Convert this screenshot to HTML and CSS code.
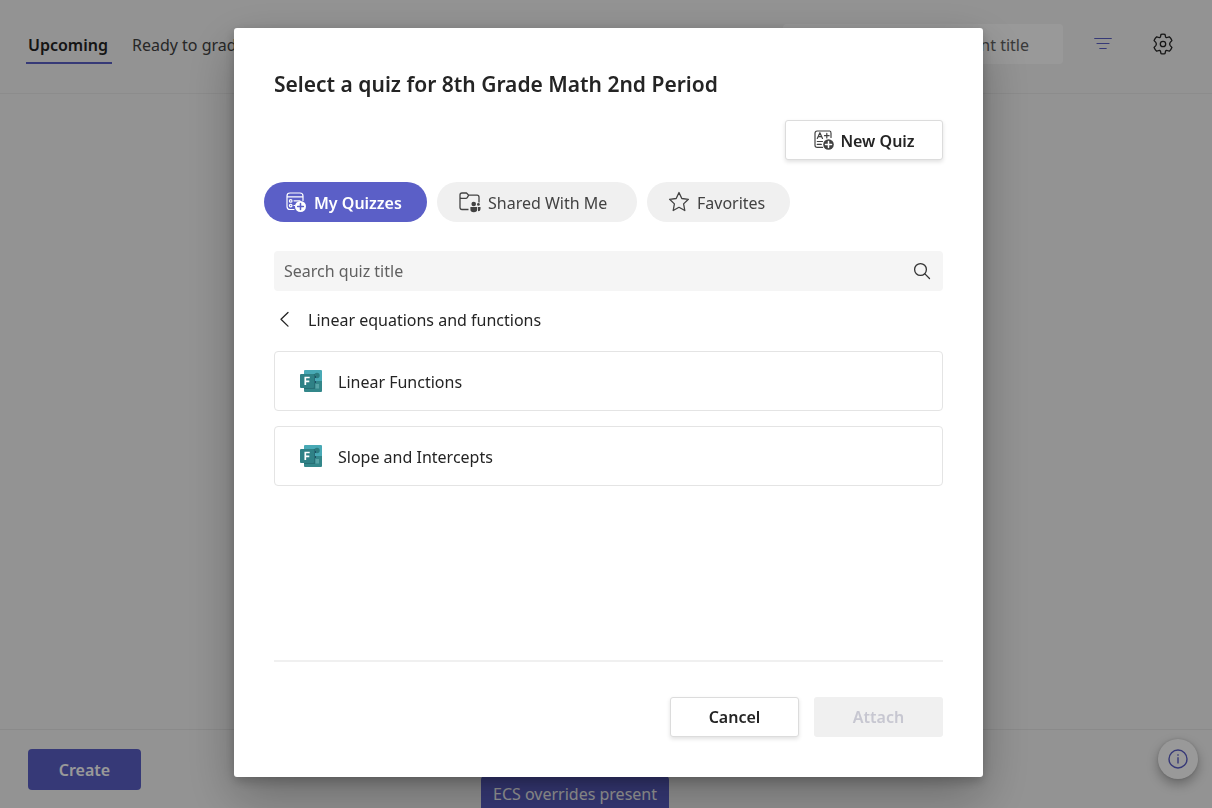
FILE: index.html
```html
<!DOCTYPE html>
<html lang="en">
<head>
<meta charset="utf-8">
<meta name="viewport" content="width=device-width, initial-scale=1">
<title>Assignments</title>
<link rel="stylesheet" href="styles.css">
</head>
<body>
<div class="page">
  <header class="topbar">
    <nav class="tabs">
      <a class="tab tab-active" href="#upcoming">Upcoming</a>
      <a class="tab" href="#ready">Ready to grade</a>
    </nav>
    <div class="tools">
      <input class="page-search" type="text" aria-label="Search assignments" placeholder="Search by assignment title">
      <button class="tool" type="button" aria-label="Filter">
        <svg width="20" height="20" viewBox="0 0 20 20" fill="none" stroke="#5b5fc7" stroke-width="1.2" stroke-linecap="round"><path d="M1.700 4.500h16.600M4 9.500h12M6.800 14.500h6.400"/></svg>
      </button>
      <button class="tool" type="button" aria-label="Settings">
        <svg width="22" height="22" viewBox="0 0 22 22" fill="none" stroke="#242424" stroke-width="1.3" stroke-linejoin="round"><path d="M9 1.300Q11 .8 13 1.300L13.500 3.700Q13.900 4.700 15 4.500L17.300 3.800Q19 5.300 19.900 7.600L18.200 9.400Q17 11 18.200 12.600L19.900 14.400Q19 16.700 17.300 18.200L15 17.500Q13.900 17.300 13.500 18.300L13 20.700Q11 21.200 9 20.700L8.500 18.300Q8.100 17.300 7 17.500L4.700 18.200Q3 16.700 2.100 14.400L3.800 12.600Q5 11 3.800 9.400L2.100 7.600Q3 5.300 4.700 3.800L7 4.500Q8.100 4.700 8.500 3.700Z"/><circle cx="11" cy="11" r="2.700"/></svg>
      </button>
    </div>
  </header>
  <main class="content"></main>
  <footer class="bottombar">
    <button class="create" type="button">Create</button>
    <button class="info" type="button" aria-label="Information">
      <svg width="20" height="20" viewBox="0 0 20 20" fill="none" stroke="#5b5fc7" stroke-width="1.400"><circle cx="10" cy="10" r="9"/><path d="M10 8.300v6.200M10 5.300v1.500"/></svg>
    </button>
  </footer>
  <div class="notice">ECS overrides present</div>
</div>

<div class="overlay">
  <section class="dialog" role="dialog" aria-modal="true" aria-labelledby="dialog-title">
    <h1 class="dialog-title" id="dialog-title">Select a quiz for 8th Grade Math 2nd Period</h1>
    <div class="new-row">
      <button class="btn btn-new" type="button">
        <svg width="22" height="22" viewBox="0 0 22 22" fill="none" stroke="#424242" stroke-width="1.200" stroke-linecap="round" stroke-linejoin="round"><path d="M9.500 18.400H4.200Q2 18.400 2 16.200V4.200Q2 2 4.200 2h12.600Q18 2 18 4.200v4.300M4.300 9.500l2.600-5.800 2.600 5.800M5.200 7.700h3.400M11.500 6.700h4.600M13.800 4.400V9M4.300 12.500h5.200M4.300 15.400h4"/><circle cx="15.500" cy="15.500" r="5.300" fill="#424242" stroke="none"/><path stroke="#fff" stroke-width="1.500" d="M15.500 12.500v6M12.500 15.500h6"/></svg>
        <span>New Quiz</span>
      </button>
    </div>
    <div class="pills">
      <button class="pill pill-active" type="button" aria-pressed="true">
        <svg width="22" height="22" viewBox="0 0 22 22" fill="none" stroke="#fff" stroke-width="1.200" stroke-linecap="round"><path d="M9 18.500H5Q2 18.500 2 15.500V5Q2 2 5 2h10q3 0 3 3v4.500M2.300 5.800h15.400M9 9.800h6M9 14.500h1"/><circle cx="5.700" cy="9.900" r="1.300"/><circle cx="5.700" cy="14.600" r="1.300"/><circle cx="15.500" cy="15.500" r="5.500" fill="#fff" stroke="none"/><path stroke="#5b5fc7" stroke-width="1.500" d="M15.500 12.600v5.800M12.600 15.500h5.800"/></svg>
        <span>My Quizzes</span>
      </button>
      <button class="pill" type="button" aria-pressed="false">
        <svg width="23" height="22" viewBox="0 0 23 22" fill="none" stroke="#424242" stroke-width="1.300" stroke-linejoin="round"><path d="M10.500 18.500H4Q2 18.500 2 16.500V4Q2 2 4 2h4.500l2.200 2.200H19q2 0 2 2v5.300M2 6.500q.3.800 1.500.8h4.300q1 0 1.600-.9l1.300-2.200"/><g fill="#424242" stroke="none"><circle cx="15.700" cy="13" r="2.300"/><circle cx="20.400" cy="13.400" r="1.400"/><path d="M12.400 16h6.800v2.500q0 2.700-3.400 2.700t-3.400-2.700zM20 16h2.500v2.200q0 2-2.500 2z"/></g></svg>
        <span>Shared With Me</span>
      </button>
      <button class="pill pill-last" type="button" aria-pressed="false">
        <svg width="22" height="22" viewBox="0 0 22 22" fill="none" stroke="#424242" stroke-width="1.300" stroke-linejoin="round"><path d="M11 1.500l2.800 6 6.600.8-4.800 4.600 1.200 6.600L11 16.300l-5.800 3.200 1.200-6.600L1.600 8.300l6.600-.8z"/></svg>
        <span>Favorites</span>
      </button>
    </div>
    <div class="search">
      <input class="search-input" type="text" aria-label="Search quiz title" placeholder="Search quiz title">
      <svg width="18" height="18" viewBox="0 0 18 18" fill="none" stroke="#333" stroke-width="1.300" stroke-linecap="round"><circle cx="7.500" cy="7.500" r="5.900"/><path d="M11.900 11.900l4.600 4.600"/></svg>
    </div>
    <div class="crumb">
      <button class="back" type="button" aria-label="Back">
        <svg width="22" height="22" viewBox="0 0 22 22" fill="none" stroke="#242424" stroke-width="1.300" stroke-linecap="round" stroke-linejoin="round"><path d="M14 3.500l-7 6.800 7 6.800"/></svg>
      </button>
      <span>Linear equations and functions</span>
    </div>
    <div class="list">
      <button class="quiz" type="button">
        <svg class="forms" width="22" height="22" viewBox="0 0 22 22"><path fill="#48a9b5" d="M5 0h16q1 0 1 1v10H4V1q0-1 1-1z"/><path fill="#33878a" d="M4 11h18v10q0 1-1 1H5q-1 0-1-1z"/><circle cx="17" cy="5.500" r="2.700" fill="#2c7c80"/><path fill="#276f75" d="M4 4h11v15H4z"/><path fill="#57a3a6" d="M15.500 14H19v4.500h-3.500z"/><path fill="#1d4f68" d="M15 6h1v2h-1zM15 11h1v2h-1z"/><rect y="4" width="14" height="14" rx="1" fill="#2f8186"/><path d="M5.300 15V7.500h4.400M5.300 11.300h4" fill="none" stroke="#fff" stroke-width="1.700"/></svg>
        <span>Linear Functions</span>
      </button>
      <button class="quiz" type="button">
        <svg class="forms" width="22" height="22" viewBox="0 0 22 22"><path fill="#48a9b5" d="M5 0h16q1 0 1 1v10H4V1q0-1 1-1z"/><path fill="#33878a" d="M4 11h18v10q0 1-1 1H5q-1 0-1-1z"/><circle cx="17" cy="5.500" r="2.700" fill="#2c7c80"/><path fill="#276f75" d="M4 4h11v15H4z"/><path fill="#57a3a6" d="M15.500 14H19v4.500h-3.500z"/><path fill="#1d4f68" d="M15 6h1v2h-1zM15 11h1v2h-1z"/><rect y="4" width="14" height="14" rx="1" fill="#2f8186"/><path d="M5.300 15V7.500h4.400M5.300 11.300h4" fill="none" stroke="#fff" stroke-width="1.700"/></svg>
        <span>Slope and Intercepts</span>
      </button>
    </div>
    <div class="actions">
      <button class="btn" type="button">Cancel</button>
      <button class="btn btn-disabled" type="button" disabled>Attach</button>
    </div>
  </section>
</div>
</body>
</html>
```
FILE: styles.css
```css
* { box-sizing: border-box; }

body {
  margin: 0;
  font-family: "Segoe UI", "Noto Sans", "Open Sans", sans-serif;
  font-size: 16px;
  line-height: 24px;
  color: #242424;
}

button, input { font: inherit; color: inherit; }
button { margin: 0; padding: 0; border: 0; background: none; }
svg { display: block; flex: none; }

.page {
  position: relative;
  display: flex;
  flex-direction: column;
  min-height: 100vh;
  overflow: hidden;
  background: #f5f5f5;
}

.topbar {
  display: flex;
  justify-content: space-between;
  align-items: center;
  height: 94px;
  padding: 0 29px 6px 26px;
  border-bottom: 1px solid #e9e9e9;
}

.tabs { display: flex; gap: 18px; }
.tab {
  padding: 9px 2px 5px;
  border-bottom: 2px solid transparent;
  color: #424242;
  text-decoration: none;
  white-space: nowrap;
}
.tab-active { padding-right: 4px; border-color: #5b5fc7; color: #242424; font-weight: 600; }

.tools { display: flex; align-items: center; gap: 20px; }
.page-search {
  width: 280px;
  height: 40px;
  padding: 2px 34px 0 10px;
  border: 0;
  border-radius: 4px;
  background: #fff;
  text-align: right;
}
.page-search::placeholder { color: #616161; opacity: 1; }
.tool { display: grid; place-items: center; width: 40px; height: 40px; }

.content { flex: 1; }

.bottombar {
  display: flex;
  justify-content: space-between;
  align-items: flex-start;
  height: 79px;
  padding: 9px 14px 0 28px;
  border-top: 1px solid #e6e6e6;
}
.create {
  width: 113px;
  height: 41px;
  margin-top: 10px;
  border-radius: 4px;
  background: #5b5fc7;
  color: #fff;
  font-weight: 600;
}
.info {
  display: grid;
  place-items: center;
  width: 40px;
  height: 40px;
  border-radius: 50%;
  background: #fff;
  box-shadow: 0 5px 12px rgba(0, 0, 0, .3), 0 0 3px rgba(0, 0, 0, .15);
}

.notice {
  position: absolute;
  bottom: -6px;
  left: 50%;
  width: 188px;
  margin-left: -125px;
  padding: 6px 0 8px;
  border-radius: 4px;
  background: #5b5fc7;
  color: #fff;
  text-align: center;
  white-space: nowrap;
}

.overlay {
  position: fixed;
  inset: 0;
  display: flex;
  justify-content: center;
  padding: 28px 0 31px 5px;
  background: rgba(0, 0, 0, .4);
}

.dialog {
  display: flex;
  flex-direction: column;
  width: 100%;
  max-width: 749px;
  padding: 40px;
  border-radius: 3px;
  background: #fff;
  box-shadow: 0 20px 50px rgba(0, 0, 0, .28), 0 4px 12px rgba(0, 0, 0, .22);
}

.dialog-title { margin: 0; font-size: 21px; line-height: 32px; font-weight: 600; }

.new-row { display: flex; justify-content: flex-end; margin-top: 20px; }

.btn {
  display: flex;
  justify-content: center;
  align-items: center;
  width: 129px;
  height: 40px;
  border: 1px solid #dcdcdc;
  border-radius: 3px;
  background: #fff;
  box-shadow: 0 2px 4px rgba(0, 0, 0, .12);
  font-weight: 600;
}
.btn-new { width: 158px; gap: 5px; }
.btn-disabled { border: 0; background: #f0f0f0; color: #c7c7d1; box-shadow: none; }

.pills { display: flex; gap: 10px; margin: 22px 0 0 -10px; }
.pill {
  display: flex;
  align-items: center;
  gap: 7px;
  width: 200px;
  height: 40px;
  padding-left: 21px;
  border-radius: 20px;
  background: #f0f0f0;
  color: #424242;
  white-space: nowrap;
}
.pill-active { width: 163px; background: #5b5fc7; color: #fff; font-weight: 600; }
.pill-last { width: 143px; }
.btn-new span, .pill span, .quiz span { padding-top: 2px; }

.search {
  display: flex;
  align-items: center;
  height: 40px;
  margin-top: 29px;
  padding: 0 12px 0 10px;
  border-radius: 4px;
  background: #f5f5f5;
}
.search-input { flex: 1; min-width: 0; padding: 0; border: 0; background: none; outline: 0; }
.search-input::placeholder { color: #616161; opacity: 1; }

.crumb { display: flex; align-items: center; gap: 12px; margin-top: 16px; line-height: 26px; }

.list { display: flex; flex-direction: column; gap: 15px; margin-top: 18px; }
.quiz {
  display: flex;
  align-items: center;
  gap: 16px;
  height: 60px;
  padding: 0 25px;
  border: 1px solid #e4e4e4;
  border-radius: 4px;
  text-align: left;
}

.actions {
  display: flex;
  justify-content: flex-end;
  gap: 15px;
  margin-top: auto;
  padding-top: 35px;
  border-top: 2px solid #f0f0f0;
}
```
